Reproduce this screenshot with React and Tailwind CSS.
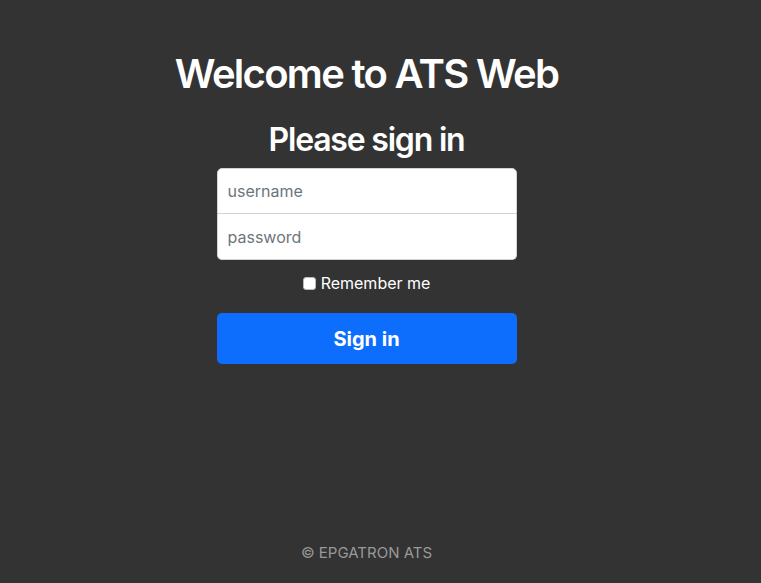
import React from "react";

export default function App() {
  return (
    <div
      className="w-[761px] h-[583px] bg-[#333333] overflow-hidden"
      style={{ fontFamily: "Inter, 'Liberation Sans', sans-serif" }}
    >
      <div className="w-[733px] h-full flex flex-col items-center">
        <h1 className="mt-[50px] text-[40px] leading-[48px] font-semibold text-white tracking-[-1.7px]">
          Welcome to ATS Web
        </h1>
        <h2 className="mt-[22px] text-[32px] leading-[40px] font-semibold text-white tracking-[-1.2px]">
          Please sign in
        </h2>
        <form className="mt-[8px] w-[300px] flex flex-col">
          <input
            type="text"
            placeholder="username"
            className="h-[46px] w-full bg-white border border-[#ced4da] rounded-t-[5px] px-[10px] text-[16px] text-[#212529] placeholder:text-[#6c757d] outline-none"
          />
          <input
            type="password"
            placeholder="password"
            className="h-[46px] w-full bg-white border border-[#ced4da] border-t-0 rounded-b-[5px] px-[10px] text-[16px] text-[#212529] placeholder:text-[#6c757d] outline-none"
          />
          <label className="mt-[13px] flex items-center justify-center gap-[5px] text-[16px] leading-[20px] text-white">
            <span className="w-[13px] h-[13px] bg-white rounded-[3px] border border-[#bbb]" />
            Remember me
          </label>
          <button
            type="button"
            className="mt-[20px] h-[51px] w-full bg-[#0d6efd] rounded-[5px] text-white text-[20px] font-bold"
          >
            Sign in
          </button>
        </form>
        <div className="mt-auto mb-[19px] text-[15px] text-[#999999]">© EPGATRON ATS</div>
      </div>
    </div>
  );
}
